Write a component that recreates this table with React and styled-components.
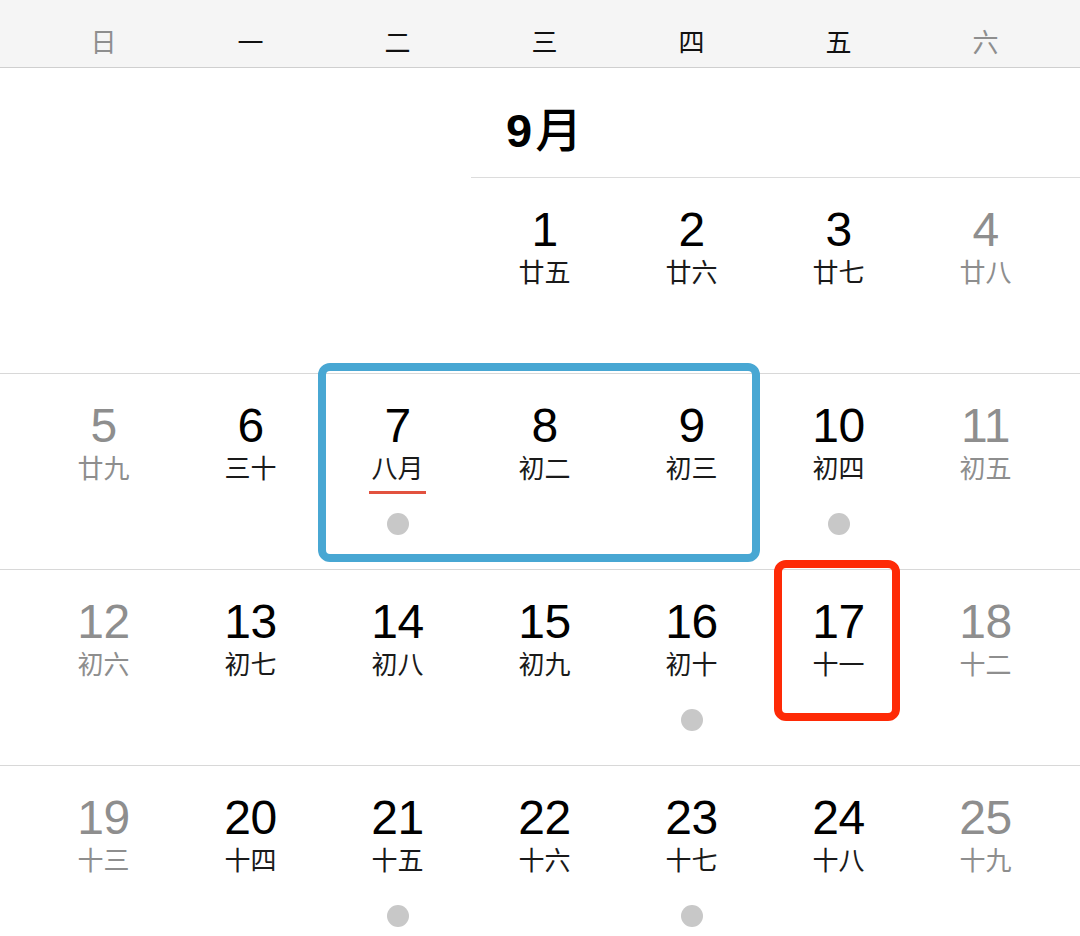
import React from "react";
import styled, { createGlobalStyle } from "styled-components";

const GlobalStyle = createGlobalStyle`
  html, body { margin: 0; padding: 0; background: #ffffff; }
  body {
    font-family: "Liberation Sans", "Noto Sans CJK SC", sans-serif;
    -webkit-font-smoothing: antialiased;
  }
`;

const CJK = `"Noto Sans CJK SC", "Noto Sans", sans-serif`;
const NUM = `"Liberation Sans", "Noto Sans CJK SC", sans-serif`;
const GRAY = "#8e8e8e";

const Page = styled.div`
  width: 1080px;
  height: 936px;
  overflow: hidden;
  background: #fff;
`;

const WeekHeader = styled.div`
  display: grid;
  grid-template-columns: repeat(7, 147px);
  padding: 28px 21px 0 30px;
  height: 68px;
  box-sizing: border-box;
  background: #f5f5f5;
  border-bottom: 1px solid #cfcfcf;
`;

const WeekLabel = styled.div`
  text-align: center;
  font-family: ${CJK};
  font-size: 26px;
  line-height: 26px;
  color: ${(p) => (p.$weekend ? GRAY : "#111")};
`;

const MonthSection = styled.div`
  display: grid;
  grid-template-columns: 30px repeat(7, 147px) 1fr;
  height: 110px;
`;

const MonthLabel = styled.div`
  grid-column: 5 / -1;
  display: flex;
  align-items: baseline;
  padding: 35px 0 0 35px;
  box-sizing: border-box;
  border-bottom: 1px solid #dcdcdc;
  font-size: 47px;
  line-height: 47px;
  color: #000;
`;

const MonthNumber = styled.span`
  font-family: ${NUM};
  font-weight: 700;
`;

const MonthUnit = styled.span`
  margin-left: 3px;
  font-family: ${CJK};
  font-weight: 500;
`;

const WeekRow = styled.div`
  position: relative;
  display: grid;
  grid-template-columns: repeat(7, 147px);
  padding: 0 21px 0 30px;
  height: 196px;
  box-sizing: border-box;
  border-bottom: ${(p) => (p.$last ? "none" : "1px solid #d8d8d8")};
`;

const Cell = styled.div`
  display: flex;
  flex-direction: column;
  align-items: center;
  padding-top: 28px;
  color: ${(p) => (p.$weekend ? GRAY : "#000")};
`;

const DayNumber = styled.div`
  font-family: ${NUM};
  font-size: 48px;
  line-height: 48px;
  letter-spacing: -0.5px;
`;

const Lunar = styled.div`
  position: relative;
  margin-top: 4px;
  font-family: ${CJK};
  font-size: 26px;
  line-height: 26px;
  color: ${(p) => (p.$weekend ? GRAY : "#1a1a1a")};

  ${(p) =>
    p.$marked &&
    `
    &::after {
      content: "";
      position: absolute;
      left: -2px;
      right: -2px;
      bottom: -14px;
      height: 3px;
      background: #e2523f;
    }
  `}
`;

const EventDot = styled.div`
  margin-top: 33px;
  width: 22px;
  height: 22px;
  border-radius: 50%;
  background: #c8c8c8;
`;

const HighlightFrame = styled.div`
  position: absolute;
  left: ${(p) => p.$left}px;
  top: ${(p) => p.$top}px;
  width: ${(p) => p.$width}px;
  height: ${(p) => p.$height}px;
  box-sizing: border-box;
  border: 8px solid ${(p) => p.$color};
  border-radius: 12px;
  pointer-events: none;
`;

const weeks = [
  [
    null,
    null,
    null,
    { d: 1, l: "廿五" },
    { d: 2, l: "廿六" },
    { d: 3, l: "廿七" },
    { d: 4, l: "廿八" },
  ],
  [
    { d: 5, l: "廿九" },
    { d: 6, l: "三十" },
    { d: 7, l: "八月", marked: true, dot: true },
    { d: 8, l: "初二" },
    { d: 9, l: "初三" },
    { d: 10, l: "初四", dot: true },
    { d: 11, l: "初五" },
  ],
  [
    { d: 12, l: "初六" },
    { d: 13, l: "初七" },
    { d: 14, l: "初八" },
    { d: 15, l: "初九" },
    { d: 16, l: "初十", dot: true },
    { d: 17, l: "十一" },
    { d: 18, l: "十二" },
  ],
  [
    { d: 19, l: "十三" },
    { d: 20, l: "十四" },
    { d: 21, l: "十五", dot: true },
    { d: 22, l: "十六" },
    { d: 23, l: "十七", dot: true },
    { d: 24, l: "十八" },
    { d: 25, l: "十九" },
  ],
];

const weekdayNames = ["日", "一", "二", "三", "四", "五", "六"];

const frames = {
  1: { left: 318, top: -11, width: 442, height: 199, color: "#48a7d3" },
  2: { left: 774, top: -10, width: 126, height: 161, color: "#fe2a06" },
};

export default function App() {
  return (
    <Page>
      <GlobalStyle />
      <WeekHeader>
        {weekdayNames.map((n, i) => (
          <WeekLabel key={n} $weekend={i === 0 || i === 6}>
            {n}
          </WeekLabel>
        ))}
      </WeekHeader>
      <MonthSection>
        <MonthLabel>
          <MonthNumber>9</MonthNumber>
          <MonthUnit>月</MonthUnit>
        </MonthLabel>
      </MonthSection>
      {weeks.map((week, wi) => {
        const f = frames[wi];
        return (
          <WeekRow key={wi} $last={wi === weeks.length - 1}>
            {week.map((day, di) => {
              const weekend = di === 0 || di === 6;
              if (!day) return <Cell key={di} />;
              return (
                <Cell key={di} $weekend={weekend}>
                  <DayNumber>{day.d}</DayNumber>
                  <Lunar $weekend={weekend} $marked={day.marked}>
                    {day.l}
                  </Lunar>
                  {day.dot && <EventDot />}
                </Cell>
              );
            })}
            {f && (
              <HighlightFrame
                $left={f.left}
                $top={f.top}
                $width={f.width}
                $height={f.height}
                $color={f.color}
              />
            )}
          </WeekRow>
        );
      })}
    </Page>
  );
}
